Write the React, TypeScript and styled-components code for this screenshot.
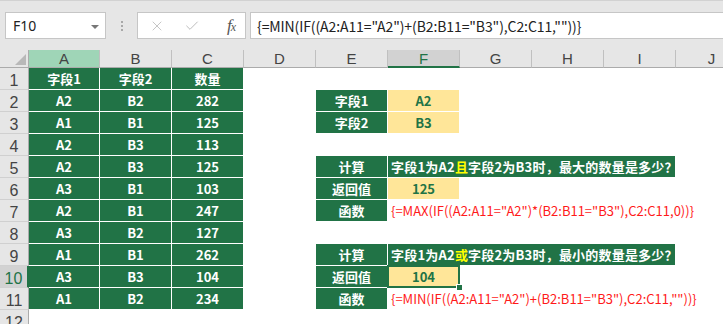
import React from 'react';
import styled, { createGlobalStyle, css } from 'styled-components';
import { X, Check } from 'lucide-react';

const GREEN = '#217346';
const GOLD = '#ffe699';
const HEAD_BG = '#e6e6e6';
const CJK = '"Noto Sans CJK SC", "Noto Sans", sans-serif';

const GlobalStyle = createGlobalStyle`
  html, body {
    margin: 0;
    padding: 0;
    background: #ffffff;
    overflow: hidden;
  }
`;

const Window = styled.div`
  width: 723px;
  height: 324px;
  overflow: hidden;
  background: #ffffff;
`;

/* ---------- formula bar ---------- */

const FormulaBar = styled.div`
  height: 50px;
  box-sizing: border-box;
  background: ${HEAD_BG};
  border-top: 1px solid #d2d2d2;
  display: flex;
  align-items: flex-start;
  padding: 11px 0 0 5px;
`;

const NameBox = styled.div`
  position: relative;
  width: 101px;
  height: 27px;
  box-sizing: border-box;
  background: #fff;
  border: 1px solid #c6c6c6;
  display: flex;
  align-items: center;
  padding-left: 7px;
  font-family: 'Noto Sans', sans-serif;
  font-size: 14px;
  color: #222;

  &::after {
    content: '';
    position: absolute;
    right: 6px;
    top: 12px;
    border-left: 4px solid transparent;
    border-right: 4px solid transparent;
    border-top: 4px solid #777;
  }
`;

const Grip = styled.div`
  width: 31px;
  height: 27px;
  display: flex;
  flex-direction: column;
  align-items: center;
  justify-content: center;
  gap: 2px;

  span {
    width: 2px;
    height: 2px;
    background: #a8a8a8;
  }
`;

const FuncBox = styled.div`
  width: 109px;
  height: 27px;
  box-sizing: border-box;
  background: #fff;
  border: 1px solid #c6c6c6;
  display: flex;
  align-items: center;
  padding: 0 10px 0 11px;
  gap: 19px;
`;

const FxMark = styled.span`
  margin-left: auto;
  font-family: 'Liberation Serif', serif;
  font-style: italic;
  font-size: 17px;
  color: #555;
  letter-spacing: -1px;

  small {
    font-size: 12px;
  }
`;

const FormulaInput = styled.div`
  flex: 1;
  height: 27px;
  margin-left: 4px;
  box-sizing: border-box;
  background: #fff;
  border: 1px solid #c6c6c6;
  border-right: none;
  display: flex;
  align-items: center;
  padding-left: 6px;
  font-family: ${CJK};
  font-size: 14px;
  color: #222;
  letter-spacing: -0.1px;
  white-space: nowrap;
`;

/* ---------- sheet ---------- */

const Sheet = styled.div`
  display: grid;
  grid-template-columns: 29px 71px repeat(9, 72px);
  grid-template-rows: 18px repeat(12, 22px);
`;

const headBase = css`
  background: ${HEAD_BG};
  box-sizing: border-box;
  display: flex;
  align-items: center;
  justify-content: center;
  font-family: 'Liberation Sans', sans-serif;
  font-size: 15px;
  color: #444;
`;

const Corner = styled.div`
  ${headBase};
  position: relative;
  grid-row: 1;
  grid-column: 1;
  border-right: 1px solid #ababab;
  border-bottom: 1px solid #ababab;

  &::after {
    content: '';
    position: absolute;
    right: 2px;
    bottom: 2px;
    border-left: 11px solid transparent;
    border-bottom: 11px solid #b8b8b8;
  }
`;

const ColHead = styled.div<{ $col: number; $active?: boolean; $tinted?: boolean }>`
  ${headBase};
  grid-row: 1;
  grid-column: ${(p) => p.$col};
  border-right: 1px solid #c0c0c0;
  border-bottom: ${(p) => (p.$active ? `2px solid ${GREEN}` : '1px solid #ababab')};
  background: ${(p) => (p.$active ? '#d2d2d2' : p.$tinted ? '#9fd5b7' : HEAD_BG)};
  color: ${(p) => (p.$active ? GREEN : '#444')};
  padding-top: ${(p) => (p.$active ? '1px' : '0')};
`;

const RowHead = styled.div<{ $row: number; $active?: boolean }>`
  ${headBase};
  grid-row: ${(p) => p.$row};
  grid-column: 1;
  font-size: 16px;
  padding-top: 4px;
  border-bottom: 1px solid #d0d0d0;
  border-right: ${(p) => (p.$active ? `2px solid ${GREEN}` : '1px solid #ababab')};
  background: ${(p) => (p.$active ? '#d2d2d2' : HEAD_BG)};
  color: ${(p) => (p.$active ? GREEN : '#444')};
`;

type Tone = 'green' | 'gold' | 'plain';

const Cell = styled.div<{
  $row: number;
  $col: number;
  $span?: number;
  $tone: Tone;
  $left?: boolean;
  $selected?: boolean;
}>`
  position: relative;
  grid-row: ${(p) => p.$row};
  grid-column: ${(p) => p.$col} / span ${(p) => p.$span ?? 1};
  box-sizing: border-box;
  display: flex;
  align-items: center;
  justify-content: ${(p) => (p.$left ? 'flex-start' : 'center')};
  padding: ${(p) => (p.$left ? '0 0 1px 3px' : '0 0 1px 0')};
  white-space: nowrap;
  font-family: ${CJK};
  font-size: 13px;
  font-weight: 700;
  border-right: 1px solid #fff;
  border-bottom: 1px solid #fff;
  background: ${(p) => (p.$tone === 'green' ? GREEN : p.$tone === 'gold' ? GOLD : 'transparent')};
  color: ${(p) => (p.$tone === 'green' ? '#fff' : GREEN)};

  ${(p) =>
    p.$selected &&
    css`
      &::after {
        content: '';
        position: absolute;
        left: -1px;
        top: -1px;
        right: -1px;
        bottom: -1px;
        border: 2px solid ${GREEN};
      }
      &::before {
        content: '';
        position: absolute;
        right: -4px;
        bottom: -4px;
        width: 5px;
        height: 5px;
        background: ${GREEN};
        border: 1px solid #fff;
        z-index: 1;
      }
    `}
`;

const Mark = styled.span`
  color: #ffff00;
`;

const Question = styled(Cell)`
  letter-spacing: 0.2px;
`;

const Formula = styled.span`
  font-weight: 400;
  color: #ff1a1a;
  font-size: 13px;
`;

const COLS = ['A', 'B', 'C', 'D', 'E', 'F', 'G', 'H', 'I', 'J'];

const TABLE = [
  ['字段1', '字段2', '数量'],
  ['A2', 'B2', '282'],
  ['A1', 'B1', '125'],
  ['A2', 'B3', '113'],
  ['A2', 'B3', '125'],
  ['A3', 'B1', '103'],
  ['A2', 'B1', '247'],
  ['A3', 'B2', '127'],
  ['A1', 'B1', '262'],
  ['A3', 'B3', '104'],
  ['A1', 'B2', '234'],
];

const FORMULA_MIN = '{=MIN(IF((A2:A11="A2")+(B2:B11="B3"),C2:C11,""))}';
const FORMULA_MAX = '{=MAX(IF((A2:A11="A2")*(B2:B11="B3"),C2:C11,0))}';

// sheet column letter -> grid column
const gc = (letter: string) => COLS.indexOf(letter) + 2;
// sheet row -> grid row
const gr = (row: number) => row + 1;

const Block: React.FC<{
  top: number;
  joiner: string;
  kind: string;
  value: string;
  formula: string;
  selected?: boolean;
}> = ({ top, joiner, kind, value, formula, selected }) => (
  <>
    <Cell $row={gr(top)} $col={gc('E')} $tone="green">计算</Cell>
    <Question $row={gr(top)} $col={gc('F')} $span={4} $tone="green" $left>
      字段1为A2<Mark>{joiner}</Mark>字段2为B3时，{kind}的数量是多少？
    </Question>
    <Cell $row={gr(top + 1)} $col={gc('E')} $tone="green">返回值</Cell>
    <Cell $row={gr(top + 1)} $col={gc('F')} $tone="gold" $selected={selected}>
      {value}
    </Cell>
    <Cell $row={gr(top + 2)} $col={gc('E')} $tone="green">函数</Cell>
    <Cell $row={gr(top + 2)} $col={gc('F')} $span={5} $tone="plain" $left>
      <Formula>{formula}</Formula>
    </Cell>
  </>
);

export default function App() {
  return (
    <Window>
      <GlobalStyle />
      <FormulaBar>
        <NameBox>F10</NameBox>
        <Grip>
          <span />
          <span />
          <span />
        </Grip>
        <FuncBox>
          <X size={16} strokeWidth={1.3} color="#bdbdbd" />
          <Check size={16} strokeWidth={1.5} color="#bdbdbd" />
          <FxMark>
            f<small>x</small>
          </FxMark>
        </FuncBox>
        <FormulaInput>{FORMULA_MIN}</FormulaInput>
      </FormulaBar>

      <Sheet>
        <Corner />
        {COLS.map((c, i) => (
          <ColHead key={c} $col={i + 2} $active={c === 'F'} $tinted={c === 'A'}>
            {c}
          </ColHead>
        ))}
        {Array.from({ length: 12 }, (_, i) => (
          <RowHead key={i} $row={gr(i + 1)} $active={i + 1 === 10}>
            {i + 1}
          </RowHead>
        ))}

        {TABLE.map((cells, r) =>
          cells.map((v, c) => (
            <Cell key={`${r}-${c}`} $row={gr(r + 1)} $col={c + 2} $tone="green">
              {v}
            </Cell>
          ))
        )}

        <Cell $row={gr(2)} $col={gc('E')} $tone="green">字段1</Cell>
        <Cell $row={gr(2)} $col={gc('F')} $tone="gold">A2</Cell>
        <Cell $row={gr(3)} $col={gc('E')} $tone="green">字段2</Cell>
        <Cell $row={gr(3)} $col={gc('F')} $tone="gold">B3</Cell>

        <Block top={5} joiner="且" kind="最大" value="125" formula={FORMULA_MAX} />
        <Block top={9} joiner="或" kind="最小" value="104" formula={FORMULA_MIN} selected />
      </Sheet>
    </Window>
  );
}
